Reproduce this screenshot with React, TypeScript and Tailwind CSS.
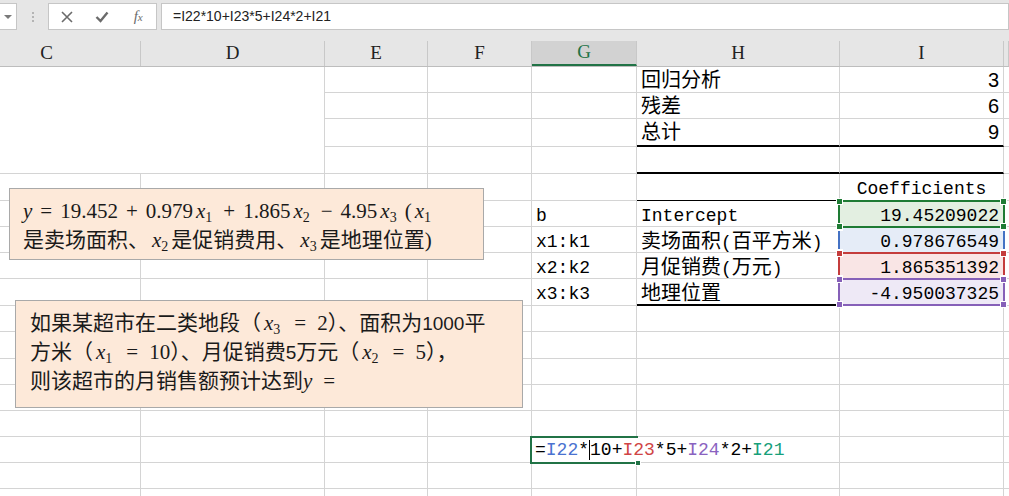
import React from "react";

// column widths C..J (C runs off the left edge) and row heights (rows 16..32)
const colW = ["w-[188px] -ml-[47px]", "w-[184px]", "w-[103px]", "w-[104px]", "w-[105px]", "w-[203px]", "w-[164px]", "w-[5px]"];
const letters = ["C", "D", "E", "F", "G", "H", "I", ""];

const GRID = "border-r border-b border-[#d4d4d4]";
const THICK = "border-r border-[#d4d4d4] border-b-2 border-b-black";
const THIN_BLACK = "border-r border-[#d4d4d4] border-b border-b-black";

const SANS = "font-['Liberation_Sans','Noto_Sans_CJK_SC',sans-serif]";
const MONO = "relative top-[2px] inline-block font-['Liberation_Mono','Noto_Sans_CJK_SC',monospace] text-[18px] leading-[22px]";
const MATH = "font-['Liberation_Serif',serif]";

// CJK runs get a bigger size than the mono latin, like SimSun in the sheet
const Mixed = ({ text }: { text: string }) => (
  <>
    {text.split(/([\u3000-\u9fff\uff00-\uffef]+)/).map((part, i) =>
      /[\u3000-\u9fff\uff00-\uffef]/.test(part) ? (
        <span key={i} className={`${SANS} text-[20px] leading-[22px]`}>
          {part}
        </span>
      ) : (
        <React.Fragment key={i}>{part}</React.Fragment>
      )
    )}
  </>
);

// italic x with a subscript, Cambria Math style
const X = ({ n }: { n: string }) => (
  <span className={`${MATH} mx-[3px]`}>
    <i>x</i>
    <sub className="inline-block text-[14px] leading-[14px]">{n}</sub>
  </span>
);

const Op = ({ c, wide }: { c: string; wide?: boolean }) => (
  <span className={`${MATH} ${wide ? "mx-[11px]" : "mx-[8px]"}`}>{c}</span>
);

// coloured border Excel draws round a range the formula refers to
const rangeColors = {
  green: { border: "border-[#1e7b34] z-[12]", fill: "bg-[#1e7b34]" },
  blue: { border: "border-[#4472c4] z-[10]", fill: "bg-[#4472c4]" },
  red: { border: "border-[#c43c3c] z-[11]", fill: "bg-[#c43c3c]" },
  purple: { border: "border-[#8660b8] z-[11]", fill: "bg-[#8660b8]" },
};

const RangeBox = ({ color }: { color: keyof typeof rangeColors }) => {
  const c = rangeColors[color];
  const dot = `absolute w-[7px] h-[7px] border border-white ${c.fill}`;
  return (
    <div className={`absolute -left-[2px] -right-[2px] -top-[1px] -bottom-[2px] border-2 ${c.border}`}>
      <div className={`${dot} -left-[4px] -top-[4px]`} />
      <div className={`${dot} -right-[4px] -top-[4px]`} />
      <div className={`${dot} -left-[4px] -bottom-[4px]`} />
      <div className={`${dot} -right-[4px] -bottom-[4px]`} />
    </div>
  );
};

// G30 in edit mode: text runs past the cell on white
const EditCell = () => (
  <div className="absolute -left-[2px] -top-[1px] -right-[2px] -bottom-[2px] z-20 border-2 border-r-0 border-[#217346]">
    <div className="absolute left-px top-0 h-[24px] bg-white pr-[3px] flex items-center whitespace-nowrap font-['Liberation_Mono',monospace] text-[18px] leading-[22px] text-black">
      <span className="pl-[2px]">=</span>
      <span className="text-[#4a72d0]">I22</span>
      <span>*</span>
      <span className="w-px h-[20px] bg-black" />
      <span>10+</span>
      <span className="text-[#d04545]">I23</span>
      <span>*5+</span>
      <span className="text-[#8a62c0]">I24</span>
      <span>*2+</span>
      <span className="text-[#16a07a]">I21</span>
    </div>
    <div className="absolute -right-[3px] -bottom-[4px] w-[6px] h-[6px] bg-[#217346] border border-white" />
  </div>
);

type Cell = { node?: React.ReactNode; cls?: string; align?: string; over?: React.ReactNode };
type Row = { h: string; cd?: "blank" | "blankLast"; g?: Cell; hh?: Cell; i?: Cell };

const sansTxt = (t: string) => <span className={`${SANS} inline-block text-[20px] leading-[22px]`}>{t}</span>;
const mono = (t: React.ReactNode) => <span className={MONO}>{t}</span>;

const rows: Row[] = [
  { h: "h-[26px]", cd: "blank", hh: { node: sansTxt("回归分析") }, i: { node: sansTxt("3"), align: "justify-end" } },
  { h: "h-[26px]", cd: "blank", hh: { node: sansTxt("残差") }, i: { node: sansTxt("6"), align: "justify-end" } },
  { h: "h-[28px]", cd: "blank", hh: { node: sansTxt("总计"), cls: THICK }, i: { node: sansTxt("9"), align: "justify-end", cls: THICK } },
  { h: "h-[27px]", cd: "blankLast", hh: { cls: THICK }, i: { cls: THICK } },
  { h: "h-[27px]", hh: { cls: THIN_BLACK }, i: { node: mono("Coefficients"), align: "justify-center" } },
  { h: "h-[26px]", g: { node: mono("b") }, hh: { node: mono("Intercept") }, i: { node: mono("19.45209022"), align: "justify-end", cls: `${GRID} bg-[#e3efe1]`, over: <RangeBox color="green" /> } },
  { h: "h-[26px]", g: { node: mono("x1:k1") }, hh: { node: mono(<Mixed text="卖场面积(百平方米)" />) }, i: { node: mono("0.978676549"), align: "justify-end", cls: `${GRID} bg-[#e5ecf7]`, over: <RangeBox color="blue" /> } },
  { h: "h-[26px]", g: { node: mono("x2:k2") }, hh: { node: mono(<Mixed text="月促销费(万元)" />) }, i: { node: mono("1.865351392"), align: "justify-end", cls: `${GRID} bg-[#f9e5e5]`, over: <RangeBox color="red" /> } },
  { h: "h-[27px]", g: { node: mono("x3:k3") }, hh: { node: mono(<Mixed text="地理位置" />), cls: THICK }, i: { node: mono("-4.950037325"), align: "justify-end", cls: `${THICK} bg-[#eee9f6]`, over: <RangeBox color="purple" /> } },
  { h: "h-[26px]" },
  { h: "h-[27px]" },
  { h: "h-[26px]" },
  { h: "h-[26px]" },
  { h: "h-[26px]" },
  { h: "h-[26px]", g: { over: <EditCell /> } },
  { h: "h-[26px]" },
  { h: "h-[26px]" },
];

const SheetRow = ({ row }: { row: Row }) => {
  const cells: Cell[] = [
    { cls: row.cd === "blank" ? "" : row.cd === "blankLast" ? "border-b border-[#d4d4d4]" : GRID },
    { cls: row.cd === "blank" ? "border-r border-[#d4d4d4]" : GRID },
    {},
    {},
    row.g ?? {},
    row.hh ?? {},
    row.i ?? {},
    {},
  ];
  return (
    <div className={`flex ${row.h}`}>
      {cells.map((c, k) => (
        <div
          key={k}
          className={`${colW[k]} relative shrink-0 flex items-center whitespace-nowrap px-[4px] text-black ${c.align ?? "justify-start"} ${c.cls ?? GRID}`}
        >
          {c.node}
          {c.over}
        </div>
      ))}
    </div>
  );
};

export default function App() {
  return (
    <div className="relative w-[1009px] h-[496px] overflow-hidden bg-white font-['Noto_Sans_CJK_SC',sans-serif]">
      {/* formula bar */}
      <div className="h-[41px] bg-[#e6e6e6] flex items-start pt-[3px]">
        <div className="w-[17px] h-[27px] bg-white border-y border-r border-[#c6c6c6] flex items-center justify-center">
          <div className="w-0 h-0 border-l-[4px] border-r-[4px] border-t-[4px] border-l-transparent border-r-transparent border-t-[#7a7a7a]" />
        </div>
        <div className="w-[31px] h-[27px] flex flex-col items-center justify-center gap-[2px]">
          <div className="w-[2px] h-[2px] bg-[#b4b4b4]" />
          <div className="w-[2px] h-[2px] bg-[#b4b4b4]" />
          <div className="w-[2px] h-[2px] bg-[#b4b4b4]" />
        </div>
        <div className="w-[109px] h-[27px] bg-white border border-[#c6c6c6] grid grid-cols-3 items-center justify-items-center">
          <svg width="12" height="12" viewBox="0 0 12 12">
            <path d="M1 1 L11 11 M11 1 L1 11" stroke="#6b6b6b" strokeWidth="1.6" fill="none" />
          </svg>
          <svg width="14" height="12" viewBox="0 0 14 12">
            <path d="M1.5 6 L5.5 10 L12.5 1.5" stroke="#6b6b6b" strokeWidth="2.4" fill="none" />
          </svg>
          <span className="font-['Liberation_Serif',serif] italic text-[15px] text-[#6b6b6b] leading-none">
            f<span className="text-[11px]">x</span>
          </span>
        </div>
        <div className="ml-[4px] flex-1 h-[27px] bg-white border border-[#c6c6c6] flex items-center pl-[11px] font-['Liberation_Sans',sans-serif] text-[14px] text-[#222]">
          =I22*10+I23*5+I24*2+I21
        </div>
      </div>

      {/* column headers */}
      <div className="flex h-[26px] bg-[#e6e6e6] border-b border-[#bdbdbd]">
        {letters.map((l, k) => (
          <div
            key={k}
            className={`${colW[k]} shrink-0 flex items-center justify-center border-r border-[#c8c8c8] font-['Liberation_Serif',serif] text-[19px] ${
              l === "G" ? "bg-[#d2d2d2] text-[#217346] border-b-2 border-b-[#217346]" : "text-[#222]"
            }`}
          >
            {l}
          </div>
        ))}
      </div>

      {/* cells */}
      <div className="flex flex-col">
        {rows.map((r, k) => (
          <SheetRow key={k} row={r} />
        ))}
      </div>

      {/* text box 1, floating over the sheet */}
      <div className="absolute left-[9px] top-[188px] z-30 w-[475px] h-[72px] bg-[#fde9d9] border border-[#a9a9a9] pl-[13px] pt-[9px] text-[21px] leading-[27px] text-[#1a1a1a] whitespace-nowrap">
        <div className={`${MATH} h-[27px]`}>
          <i>y</i>
          <Op c="=" />
          19.452
          <Op c="+" />
          0.979<X n="1" />
          <Op c="+" />
          1.865<X n="2" />
          <Op c="−" />
          4.95<X n="3" />
          <span className="ml-[5px]">(</span>
          <X n="1" />
        </div>
        <div className="h-[27px]">
          是卖场面积、<X n="2" />是促销费用、<X n="3" />是地理位置<span className={MATH}>)</span>
        </div>
      </div>

      {/* text box 2 */}
      <div className={`absolute left-[15px] top-[300px] z-30 w-[508px] h-[108px] bg-[#fde9d9] border border-[#a9a9a9] pl-[14px] pt-[8px] text-[21px] leading-[28px] text-[#1a1a1a] whitespace-nowrap ${SANS}`}>
        <div>
          如果某超市在二类地段（<X n="3" />
          <Op c="=" wide />
          <span className={MATH}>2</span>）、面积为<span className="text-[19px]">1000</span>平
        </div>
        <div>
          方米（<X n="1" />
          <Op c="=" wide />
          <span className={MATH}>10</span>）、月促销费<span className="text-[19px]">5</span>万元（<X n="2" />
          <Op c="=" wide />
          <span className={MATH}>5</span>），
        </div>
        <div>
          则该超市的月销售额预计达到<span className={MATH}><i>y</i></span>
          <Op c="=" wide />
        </div>
      </div>
    </div>
  );
}
